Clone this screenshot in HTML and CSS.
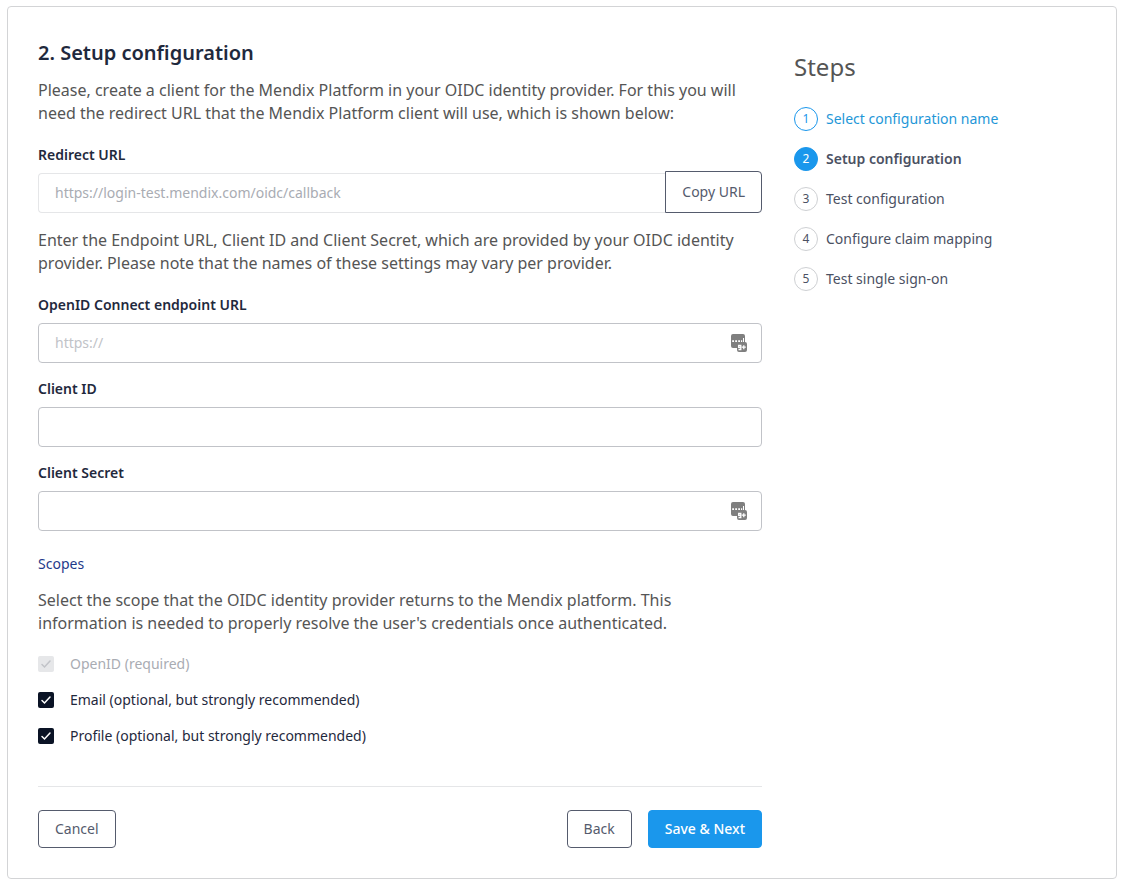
FILE: index.html
```html
<!DOCTYPE html>
<html lang="en">
<head>
<meta charset="utf-8">
<title>Setup configuration</title>
<link rel="stylesheet" href="styles.css">
</head>
<body>
<svg class="sprite" aria-hidden="true">
  <symbol id="vault" viewBox="0 0 16 18">
    <path fill="#7f7f7f" d="M2 0h10a2 2 0 0 1 2 2v6a2 2 0 0 1 2 2v6a2 2 0 0 1-2 2H8a2 2 0 0 1-2-2v-2H2a2 2 0 0 1-2-2V2a2 2 0 0 1 2-2z"/>
    <path fill="#fff" d="M1.200 6.200h1.800V8H1.200zM4.200 6.200H6V8H4.200zM7.200 6.200H9V8H7.200zM10 6.200h1.200V8H10zM12 4h1v4h-1z"/>
    <path fill="none" stroke="#fff" stroke-width="1.300" d="M9.800 13.400H7.700V11.500h2.100v4H7.500M10.800 13.200h4M12.800 11.200v4"/>
  </symbol>
</svg>
<main class="card">
  <form class="setup">
    <h1 class="title">2. Setup configuration</h1>
    <p class="text">Please, create a client for the Mendix Platform in your OIDC identity provider. For this you will need the redirect URL that the Mendix Platform client will use, which is shown below:</p>
    <div class="field">
      <label class="label" for="redirect">Redirect URL</label>
      <div class="copy-row">
        <input class="input input-locked" id="redirect" type="text" value="https://login-test.mendix.com/oidc/callback" disabled>
        <button class="button button-copy" type="button">Copy URL</button>
      </div>
    </div>
    <p class="text">Enter the Endpoint URL, Client ID and Client Secret, which are provided by your OIDC identity provider. Please note that the names of these settings may vary per provider.</p>
    <div class="field">
      <label class="label" for="endpoint">OpenID Connect endpoint URL</label>
      <div class="control">
        <input class="input" id="endpoint" type="text" placeholder="https://">
        <svg class="vault" aria-hidden="true"><use href="#vault"/></svg>
      </div>
    </div>
    <div class="field">
      <label class="label" for="client-id">Client ID</label>
      <div class="control"><input class="input" id="client-id" type="text"></div>
    </div>
    <div class="field">
      <label class="label" for="secret">Client Secret</label>
      <div class="control">
        <input class="input" id="secret" type="password">
        <svg class="vault" aria-hidden="true"><use href="#vault"/></svg>
      </div>
    </div>
    <fieldset class="scopes">
      <legend class="legend">Scopes</legend>
      <p class="text">Select the scope that the OIDC identity provider returns to the Mendix platform. This information is needed to properly resolve the user's credentials once authenticated.</p>
      <div class="options">
        <label class="option option-disabled"><span class="tick"><input class="box" type="checkbox" checked disabled><svg class="check" viewBox="0 0 16 16" aria-hidden="true"><path d="M4 8.500l2.500 2.500L12 5"/></svg></span>OpenID (required)</label>
        <label class="option"><span class="tick"><input class="box" type="checkbox" checked><svg class="check" viewBox="0 0 16 16" aria-hidden="true"><path d="M4 8.500l2.500 2.500L12 5"/></svg></span>Email (optional, but strongly recommended)</label>
        <label class="option"><span class="tick"><input class="box" type="checkbox" checked><svg class="check" viewBox="0 0 16 16" aria-hidden="true"><path d="M4 8.500l2.500 2.500L12 5"/></svg></span>Profile (optional, but strongly recommended)</label>
      </div>
    </fieldset>
    <div class="actions">
      <button class="button" type="button">Cancel</button>
      <div class="actions-end">
        <button class="button" type="button">Back</button>
        <button class="button button-primary" type="submit">Save &amp; Next</button>
      </div>
    </div>
  </form>
  <aside class="steps">
    <h2 class="steps-title">Steps</h2>
    <ol class="steps-list">
      <li class="step step-done"><span class="step-number">1</span><a class="step-link" href="#">Select configuration name</a></li>
      <li class="step step-current"><span class="step-number">2</span>Setup configuration</li>
      <li class="step"><span class="step-number">3</span>Test configuration</li>
      <li class="step"><span class="step-number">4</span>Configure claim mapping</li>
      <li class="step"><span class="step-number">5</span>Test single sign-on</li>
    </ol>
  </aside>
</main>
</body>
</html>
```
FILE: styles.css
```css
* {
  box-sizing: border-box;
}

body {
  margin: 6px 7px;
  background: #fff;
  color: #555;
  font: 14px/20px "Noto Sans", sans-serif;
}

.sprite {
  display: none;
}

.card {
  display: grid;
  grid-template-columns: 7fr 3fr;
  padding: 34px 14px 30px;
  border: 1px solid #d3d4d6;
  border-radius: 4px;
}

.setup,
.steps {
  padding: 0 16px;
}

.title {
  margin: 0 0 14px;
  color: #1f293d;
  font-size: 20px;
  font-weight: 600;
  line-height: 24px;
}

.text {
  margin: 0 0 20px;
  font-size: 16px;
  line-height: 23px;
}

.field {
  margin-bottom: 16px;
}

.label {
  display: block;
  margin-bottom: 8px;
  color: #1f293d;
  font-weight: 600;
}

.control {
  position: relative;
}

.input {
  display: block;
  width: 100%;
  height: 40px;
  padding: 0 16px 2px;
  border: 1px solid #c1c3c8;
  border-radius: 4px;
  background: #fff;
  color: #1f293d;
  font: inherit;
}

.input::placeholder {
  color: #c1c3c8;
  opacity: 1;
}

.input-locked {
  flex: 1;
  min-width: 0;
  border-color: #e5e6e8;
  border-right: 0;
  border-radius: 4px 0 0 4px;
  color: #a9acb3;
}

.vault {
  position: absolute;
  top: 11px;
  right: 15px;
  width: 16px;
  height: 18px;
}

.copy-row {
  display: flex;
  align-items: flex-end;
  margin-top: -2px;
}

.button {
  height: 38px;
  padding: 0 16px;
  border: 1px solid #555b6d;
  border-radius: 4px;
  background: #fff;
  color: #555b6d;
  font: inherit;
}

.button-copy {
  height: 42px;
  border-radius: 0 4px 4px 0;
}

.button-primary {
  border-color: #1a97ec;
  background: #1a97ec;
  color: #fff;
  font-weight: 500;
}

.scopes {
  min-width: 0;
  margin: 23px 0 0;
  padding: 0;
  border: 0;
}

.scopes .text {
  margin-bottom: 19px;
}

.legend {
  margin-bottom: 15px;
  padding: 0;
  color: #1f3a8a;
}

.options {
  display: flex;
  flex-direction: column;
  gap: 16px;
}

.option {
  display: flex;
  align-items: center;
  gap: 16px;
  color: #1f293d;
}

.option-disabled {
  color: #a9acb3;
}

.tick {
  display: grid;
  width: 16px;
  height: 16px;
}

.box,
.check {
  grid-area: 1 / 1;
  width: 16px;
  height: 16px;
}

.box {
  appearance: none;
  margin: 0;
  border-radius: 2px;
  background: #0a1325;
}

.box:disabled {
  background: #e6e7e9;
}

.check {
  z-index: 1;
  fill: none;
  stroke: #fff;
  stroke-width: 1.5;
  stroke-linecap: round;
  pointer-events: none;
}

.option-disabled .check {
  stroke: #c1c3c8;
}

.actions {
  display: flex;
  justify-content: space-between;
  margin-top: 40px;
  padding-top: 23px;
  border-top: 1px solid #e5e6e8;
}

.actions-end {
  display: flex;
  gap: 16px;
}

.steps-title {
  margin: 10px 0 24px;
  font-size: 24px;
  font-weight: 400;
  line-height: 32px;
}

.steps-list {
  display: flex;
  flex-direction: column;
  gap: 16px;
  margin: 0;
  padding: 0;
  list-style: none;
}

.step {
  display: flex;
  align-items: center;
  gap: 8px;
  color: #4b5163;
}

.step-number {
  display: grid;
  place-items: center;
  width: 24px;
  height: 24px;
  border: 1px solid #ced0d3;
  border-radius: 50%;
  font-size: 12px;
  font-weight: 400;
}

.step-done {
  color: #1a97ec;
}

.step-done .step-number {
  border-color: #1a97ec;
}

.step-link {
  color: #1f97d8;
  text-decoration: none;
}

.step-current {
  font-weight: 600;
}

.step-current .step-number {
  border-color: #1a97ec;
  background: #1a97ec;
  color: #fff;
}
```
